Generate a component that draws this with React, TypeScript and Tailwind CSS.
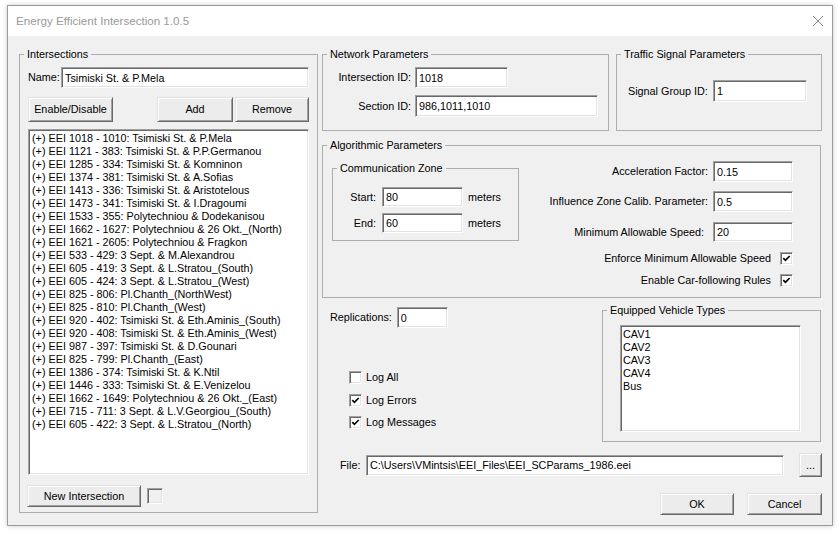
import React from 'react';

const sunken =
  "border border-t-[#a0a0a0] border-l-[#a0a0a0] border-b-white border-r-white shadow-[inset_1px_1px_0_#696969,inset_-1px_-1px_0_#e3e3e3] bg-white";
const raised =
  "border border-t-[#e3e3e3] border-l-[#e3e3e3] border-b-[#696969] border-r-[#696969] shadow-[inset_1px_1px_0_#ffffff,inset_-1px_-1px_0_#a0a0a0] bg-[#ececec]";

const intersections = [
  "(+) EEI 1018 - 1010: Tsimiski St. & P.Mela",
  "(+) EEI 1121 - 383: Tsimiski St. & P.P.Germanou",
  "(+) EEI 1285 - 334: Tsimiski St. & Komninon",
  "(+) EEI 1374 - 381: Tsimiski St. & A.Sofias",
  "(+) EEI 1413 - 336: Tsimiski St. & Aristotelous",
  "(+) EEI 1473 - 341: Tsimiski St. & I.Dragoumi",
  "(+) EEI 1533 - 355: Polytechniou & Dodekanisou",
  "(+) EEI 1662 - 1627: Polytechniou & 26 Okt._(North)",
  "(+) EEI 1621 - 2605: Polytechniou & Fragkon",
  "(+) EEI 533 - 429: 3 Sept. & M.Alexandrou",
  "(+) EEI 605 - 419: 3 Sept. & L.Stratou_(South)",
  "(+) EEI 605 - 424: 3 Sept. & L.Stratou_(West)",
  "(+) EEI 825 - 806: Pl.Chanth_(NorthWest)",
  "(+) EEI 825 - 810: Pl.Chanth_(West)",
  "(+) EEI 920 - 402: Tsimiski St. & Eth.Aminis_(South)",
  "(+) EEI 920 - 408: Tsimiski St. & Eth.Aminis_(West)",
  "(+) EEI 987 - 397: Tsimiski St. & D.Gounari",
  "(+) EEI 825 - 799: Pl.Chanth_(East)",
  "(+) EEI 1386 - 374: Tsimiski St. & K.Ntil",
  "(+) EEI 1446 - 333: Tsimiski St. & E.Venizelou",
  "(+) EEI 1662 - 1649: Polytechniou & 26 Okt._(East)",
  "(+) EEI 715 - 711: 3 Sept. & L.V.Georgiou_(South)",
  "(+) EEI 605 - 422: 3 Sept. & L.Stratou_(North)",
];

const vehicles = ["CAV1", "CAV2", "CAV3", "CAV4", "Bus"];

const Field: React.FC<{ value: string; className?: string }> = ({ value, className = "" }) => (
  <input
    readOnly
    defaultValue={value}
    className={`${sunken} ${className} px-[3px] text-[10.8px] text-black outline-none`}
  />
);

const Button: React.FC<{ label: string; className?: string }> = ({ label, className = "" }) => (
  <button className={`${raised} ${className} flex items-center justify-center text-[10.8px] text-black`}>
    {label}
  </button>
);

const Check: React.FC<{ checked?: boolean }> = ({ checked }) => (
  <div className={`${sunken} w-[13px] h-[13px] shrink-0`}>
    {checked && (
      <svg width="11" height="11" viewBox="0 0 11 11">
        <path d="M2.3 5.2 L4.4 7.4 L8.7 3" stroke="#000" strokeWidth="1.7" fill="none" />
      </svg>
    )}
  </div>
);

const Group: React.FC<{ title: string; className?: string; children?: React.ReactNode }> = ({
  title,
  className = "",
  children,
}) => (
  <fieldset className={`border border-[#adadad] px-[8px] ${className}`}>
    <legend className="ml-[-4px] px-[3px] leading-[13px]">{title}</legend>
    {children}
  </fieldset>
);

export default function App() {
  return (
    <div className="w-[839px] h-[534px] bg-white overflow-hidden font-['Liberation_Sans',Arial,sans-serif] text-[10.8px] text-black">
      <div className="ml-[7px] mt-[5px] w-[826px] h-[521px] border border-[#9a9a9a] shadow-[0_0_5px_rgba(0,0,0,0.2)] flex flex-col">
        {/* title bar */}
        <div className="h-[30px] bg-white flex items-center pl-[8px] pr-[9px]">
          <span className="text-[11.6px] text-[#999999]">Energy Efficient Intersection 1.0.5</span>
          <svg className="ml-auto" width="10" height="10" viewBox="0 0 10 10">
            <path d="M0 0 L10 10 M10 0 L0 10" stroke="#8f8f8f" strokeWidth="1" />
          </svg>
        </div>

        <div className="flex-1 bg-[#f0f0f0] flex pl-[11px] pt-[12px]">
          {/* Intersections */}
          <Group title="Intersections" className="w-[299px] h-[465px] flex flex-col">
            <div className="flex items-center mt-[6px]">
              <span className="w-[33px]">Name:</span>
              <Field value="Tsimiski St. & P.Mela" className="w-[248px] h-[21px]" />
            </div>
            <div className="flex mt-[9px]">
              <Button label="Enable/Disable" className="w-[85px] h-[25px]" />
              <Button label="Add" className="ml-auto w-[76px] h-[25px]" />
              <Button label="Remove" className="ml-[2px] w-[74px] h-[25px]" />
            </div>
            <div className={`${sunken} mt-[7px] h-[346px] pt-[2px] pl-[3px] leading-[13px]`}>
              {intersections.map((s) => (
                <div key={s} className="whitespace-nowrap">{s}</div>
              ))}
            </div>
            <div className="flex items-center mt-[10px] ml-[-1px]">
              <Button label="New Intersection" className="w-[114px] h-[22px]" />
              <div className="ml-[6px] w-[16px] h-[16px] border border-t-[#a0a0a0] border-l-[#a0a0a0] border-b-white border-r-white shadow-[inset_1px_1px_0_#696969,inset_-1px_-1px_0_#e3e3e3]" />
            </div>
          </Group>

          {/* right column */}
          <div className="ml-[4px] w-[500px] flex flex-col">
            <div className="flex gap-[7px]">
              <Group title="Network Parameters" className="w-[287px] h-[83px]">
                <div className="flex items-center mt-[6px]">
                  <span className="w-[80px] text-right">Intersection ID:</span>
                  <Field value="1018" className="ml-[4px] w-[93px] h-[21px]" />
                </div>
                <div className="flex items-center mt-[7px]">
                  <span className="w-[80px] text-right">Section ID:</span>
                  <Field value="986,1011,1010" className="ml-[4px] w-[183px] h-[22px]" />
                </div>
              </Group>
              <Group title="Traffic Signal Parameters" className="w-[206px] h-[83px]">
                <div className="flex items-center mt-[19px]">
                  <span className="pl-[3px] w-[88px]">Signal Group ID:</span>
                  <Field value="1" className="w-[94px] h-[22px]" />
                </div>
              </Group>
            </div>

            <Group title="Algorithmic Parameters" className="mt-[8px] w-[499px] h-[159px]">
              <div className="flex w-full">
                <Group title="Communication Zone" className="ml-[1px] mt-[10px] w-[187px] h-[79px] shrink-0">
                  <div className="flex items-center mt-[12px]">
                    <span className="w-[35px] text-right">Start:</span>
                    <Field value="80" className="ml-[6px] w-[81px] h-[20px]" />
                    <span className="ml-[5px]">meters</span>
                  </div>
                  <div className="flex items-center mt-[6px]">
                    <span className="w-[35px] text-right">End:</span>
                    <Field value="60" className="ml-[6px] w-[81px] h-[20px]" />
                    <span className="ml-[5px]">meters</span>
                  </div>
                </Group>
                <div className="flex-1 flex flex-col items-end pr-[19px] pt-[9px]">
                  <div className="flex items-center">
                    <span>Acceleration Factor:</span>
                    <Field value="0.15" className="ml-[5px] w-[80px] h-[21px]" />
                  </div>
                  <div className="flex items-center mt-[9px]">
                    <span>Influence Zone Calib. Parameter:</span>
                    <Field value="0.5" className="ml-[5px] w-[80px] h-[21px]" />
                  </div>
                  <div className="flex items-center mt-[10px]">
                    <span>Minimum Allowable Speed:</span>
                    <Field value="20" className="ml-[9px] w-[80px] h-[20px]" />
                  </div>
                  <div className="flex items-center mt-[10px] h-[13px]">
                    <span>Enforce Minimum Allowable Speed</span>
                    <div className="ml-[9px]"><Check checked /></div>
                  </div>
                  <div className="flex items-center mt-[9px] h-[13px]">
                    <span>Enable Car-following Rules</span>
                    <div className="ml-[9px]"><Check checked /></div>
                  </div>
                </div>
              </div>
            </Group>

            <div className="flex">
              <div className="flex-1 flex flex-col">
                <div className="flex items-center mt-[9px] pl-[8px]">
                  <span>Replications:</span>
                  <Field value="0" className="ml-[5px] w-[51px] h-[21px]" />
                </div>
                <div className="flex flex-col pl-[27px] mt-[43px]">
                  <div className="flex items-center h-[13px]">
                    <Check />
                    <span className="ml-[4px]">Log All</span>
                  </div>
                  <div className="flex items-center h-[13px] mt-[10px]">
                    <Check checked />
                    <span className="ml-[4px]">Log Errors</span>
                  </div>
                  <div className="flex items-center h-[13px] mt-[9px]">
                    <Check checked />
                    <span className="ml-[4px]">Log Messages</span>
                  </div>
                </div>
              </div>
              <Group title="Equipped Vehicle Types" className="mt-[6px] mr-[1px] w-[219px] h-[138px]">
                <div className={`${sunken} ml-[9px] mt-[8px] w-[181px] h-[107px] pt-[2px] pl-[2px] leading-[13px]`}>
                  {vehicles.map((v) => (
                    <div key={v}>{v}</div>
                  ))}
                </div>
              </Group>
            </div>

            <div className="flex items-center mt-[11px] pl-[18px]">
              <span className="w-[26px]">File:</span>
              <Field value="C:\Users\VMintsis\EEI_Files\EEI_SCParams_1986.eei" className="w-[418px] h-[21px]" />
              <Button label="..." className="ml-[15px] w-[23px] h-[24px]" />
            </div>

            <div className="flex justify-end mt-[16px] gap-[13px]">
              <Button label="OK" className="w-[74px] h-[22px]" />
              <Button label="Cancel" className="w-[75px] h-[22px]" />
            </div>
          </div>
        </div>
      </div>
    </div>
  );
}
